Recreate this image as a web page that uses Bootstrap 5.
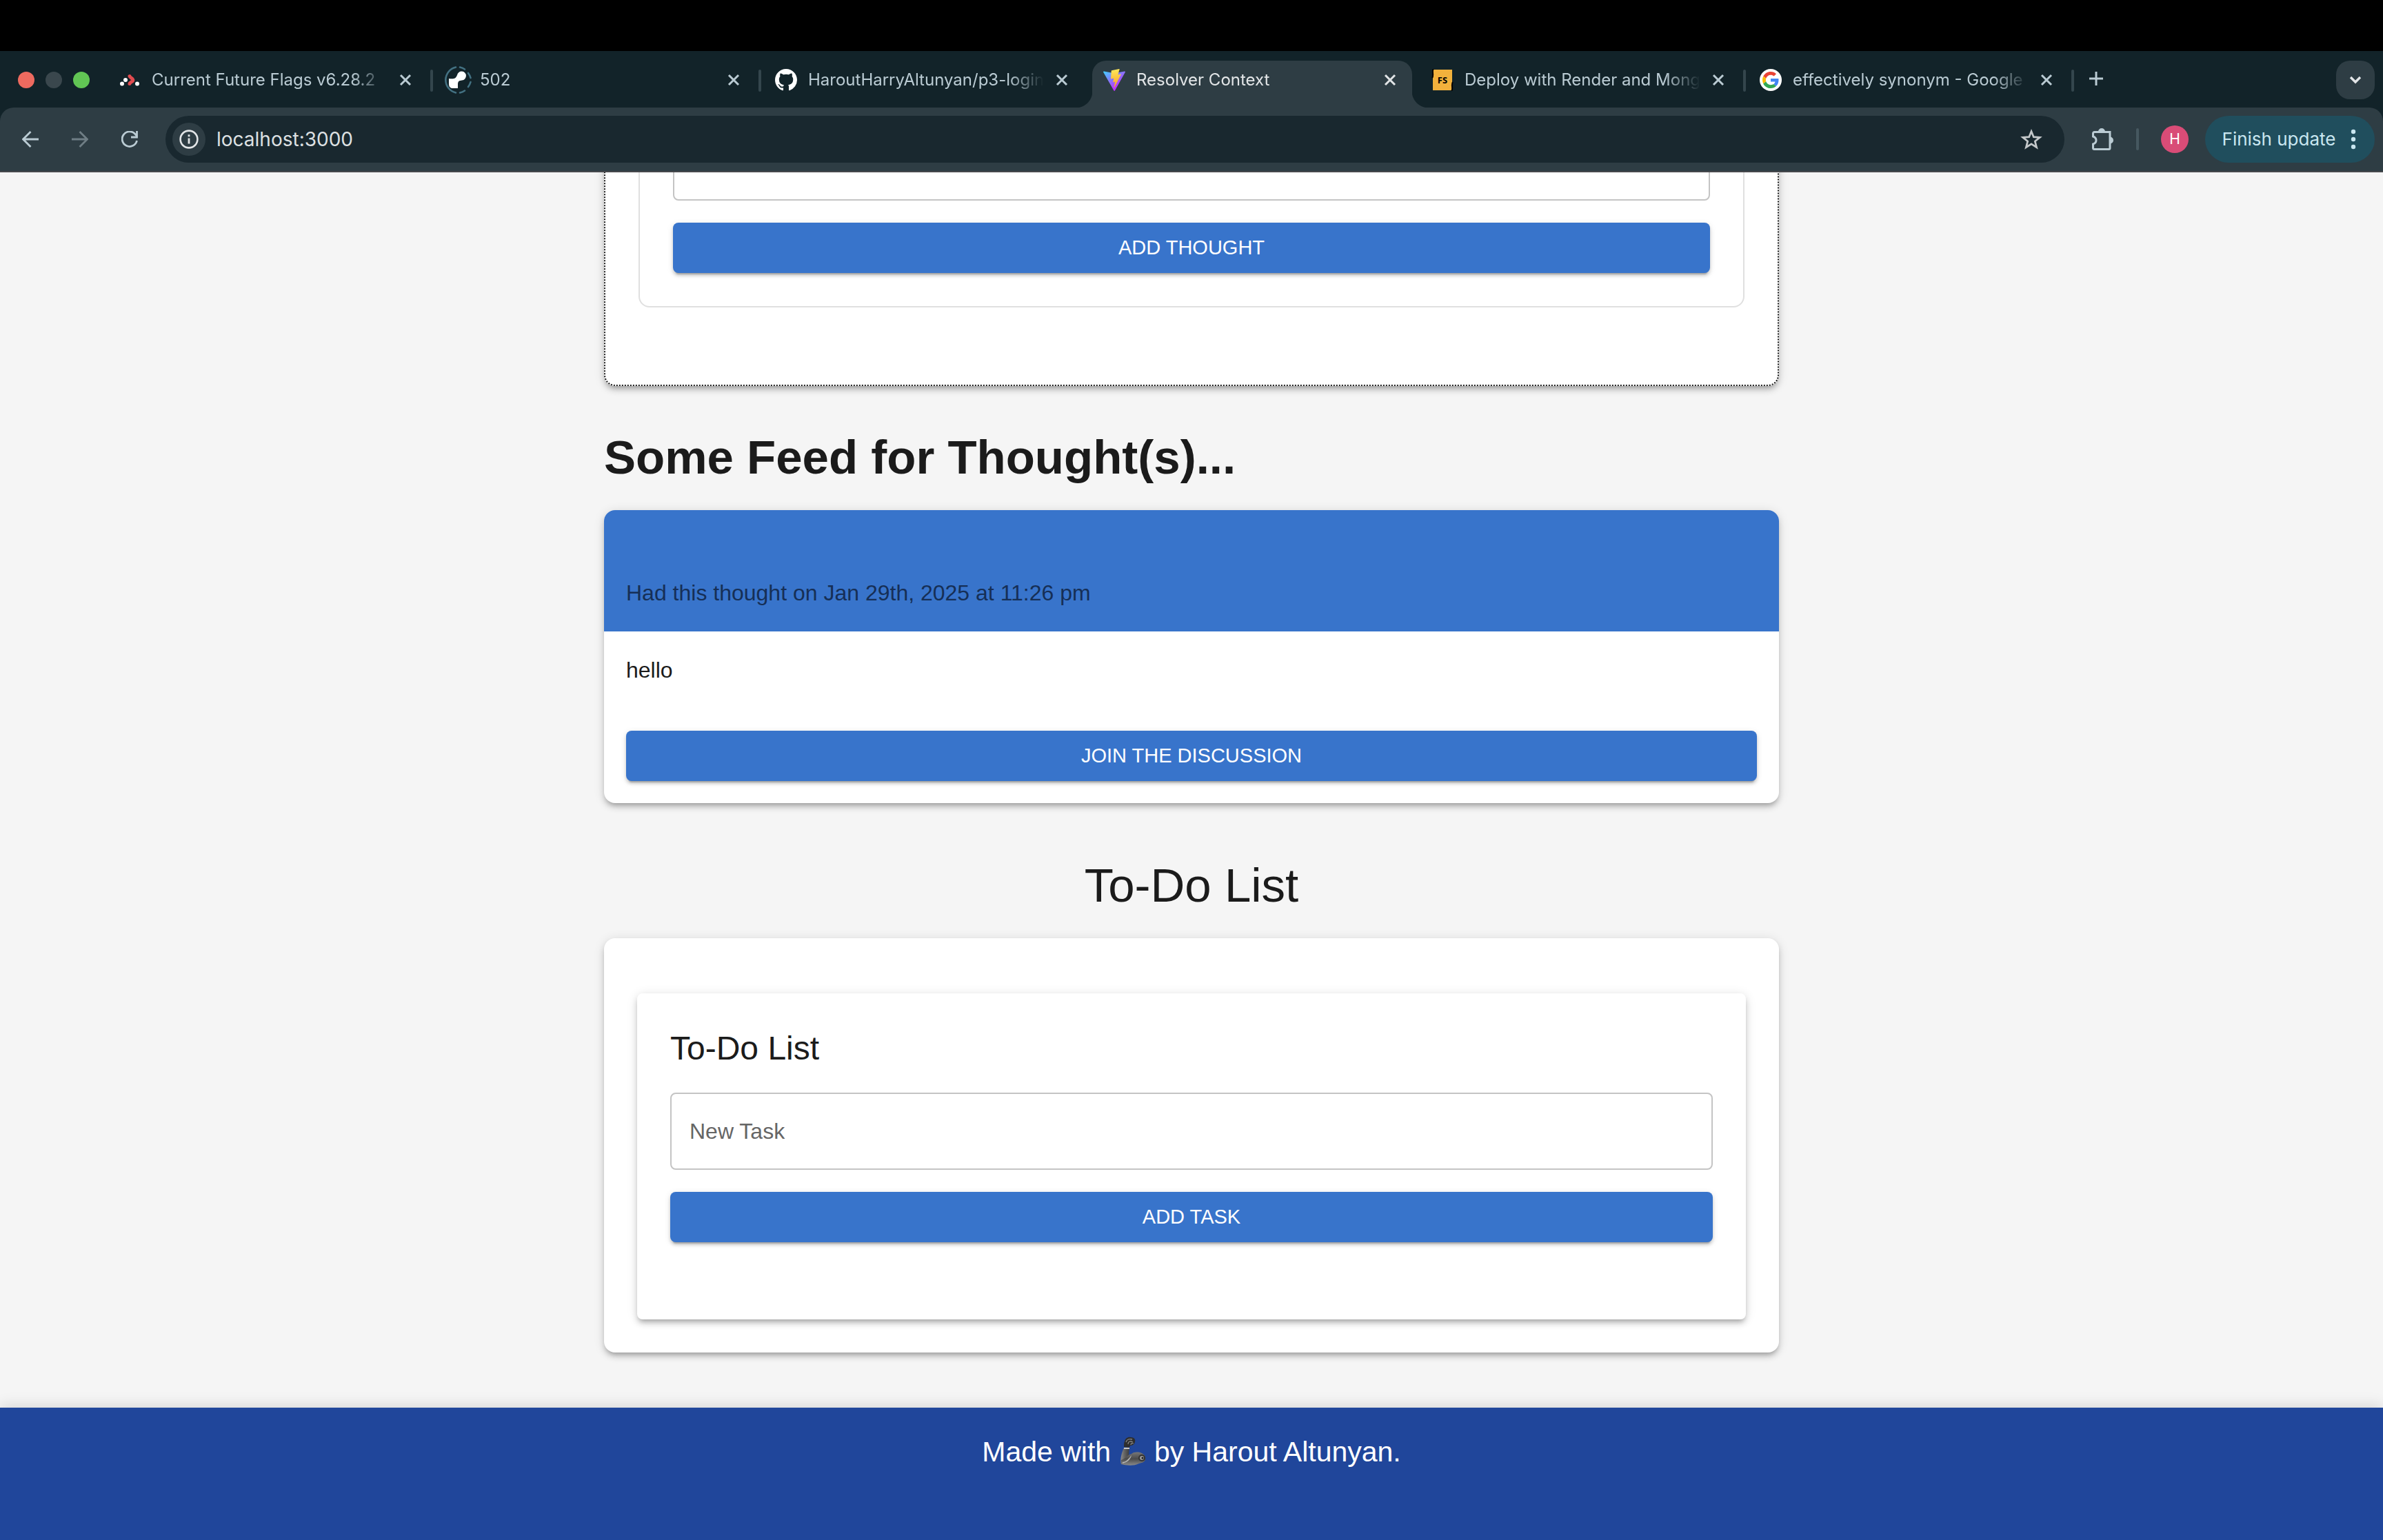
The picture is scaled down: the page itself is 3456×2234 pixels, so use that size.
<!DOCTYPE html>
<html lang="en">
<head>
<meta charset="utf-8">
<meta name="viewport" content="width=device-width, initial-scale=1">
<title>Resolver Context</title>
<link href="https://cdn.jsdelivr.net/npm/bootstrap@5.3.0/dist/css/bootstrap.min.css" rel="stylesheet">
<style>
  :root { --strip: #122329; --bar: #2e3d44; --field: #19282f; --ink: #bacbd3; --blue: #3874cb; --navy: #20469b; }
  body { background: #f5f5f5; color: #1b1b1b; font-family: "Liberation Sans", Arial, sans-serif; font-size: 32px; line-height: 48px; }
  svg { display: block; flex: none; }

  /* browser frame */
  .chrome-ui { font-family: Inter, sans-serif; color: var(--ink); background: var(--strip); line-height: 32px; }
  .chrome-ui button { border: 0; padding: 0; background: none; color: inherit; display: flex; align-items: center; justify-content: center; flex: none; }
  .menu-strip { height: 74px; background: #000; }
  .tab-strip { height: 82px; padding: 14px 12px 0 26px; }
  .lights { gap: 16px; width: 126px; height: 56px; }
  .light { width: 24px; height: 24px; border-radius: 50%; background: #3a474d; }
  .light-close { background: #ed6a5f; }
  .light-zoom { background: #61c554; }
  .tab-slot { flex: 0 1 476px; min-width: 0; padding-left: 4px; gap: 4px; }
  .tab-slot::after { content: ""; width: 4px; height: 32px; margin-top: 13px; border-radius: 2px; background: #34464d; }
  .tab-slot.plain::after { background: transparent; }
  .tab-face { position: relative; height: 68px; padding: 0 22px 12px 16px; gap: 8px; border-radius: 20px 20px 0 0; }
  .tab-face a { gap: 16px; color: inherit; font-size: 24px; }
  .tab-title { white-space: nowrap; overflow: hidden; -webkit-mask-image: linear-gradient(to left, transparent 8px, #000 60px); mask-image: linear-gradient(to left, transparent 8px, #000 60px); }
  .tab-face.current { background: var(--bar); color: #e2e5e7; }
  .tab-face.current::before, .tab-face.current::after { content: ""; position: absolute; bottom: 0; width: 24px; height: 24px; }
  .tab-face.current::before { right: 100%; background: radial-gradient(circle at 0 0, transparent 24px, var(--bar) 25px); }
  .tab-face.current::after { left: 100%; background: radial-gradient(circle at 100% 0, transparent 24px, var(--bar) 25px); }
  .new-tab { width: 64px; height: 52px; }
  .chrome-ui .tab-menu { width: 56px; height: 56px; border-radius: 20px; background: var(--bar); color: #e2e5e7; }
  .tool-bar { height: 94px; padding: 0 12px 0 20px; border-bottom: 2px solid #46484c; border-radius: 20px 20px 0 0; background: var(--bar); }
  .nav-keys { gap: 24px; width: 220px; }
  .nav-keys button { width: 48px; height: 48px; }
  .omnibox { height: 68px; padding: 0 32px 0 10px; border-radius: 34px; background: var(--field); }
  .chrome-ui .site-info { width: 48px; height: 48px; border-radius: 50%; background: var(--bar); color: #e2e5e7; }
  .omnibox input { border: 0; outline: 0; padding: 0 0 0 16px; background: none; color: #dde0e2; font-size: 28px; }
  .bar-tools { gap: 32px; padding-left: 40px; }
  .bar-rule { width: 4px; height: 32px; border-radius: 2px; background: #465860; }
  .chrome-ui .avatar { width: 40px; height: 40px; margin-right: -8px; border-radius: 50%; background: #d94c77; color: #fff; font-size: 21px; }
  .chrome-ui .update-key { width: 246px; height: 68px; gap: 22px; padding-right: 2px; border-radius: 34px; background: #204e5d; color: #c9e6f0; font-size: 26px; }

  /* page */
  .page-view { min-height: 0; }
  .page-column { width: 100%; max-width: 1704px; margin-bottom: 80px; }
  .raised { border: 0; border-radius: 16px; background: #fff; box-shadow: 0 6px 6px -4px rgba(0,0,0,.2), 0 6px 8px rgba(0,0,0,.14), 0 2px 16px rgba(0,0,0,.12); }
  .raised-inner { border-radius: 8px; padding: 48px 48px 112px; }
  .dotted-card { border: 2px dotted #1b1b1b; padding: 48px 48px 112px; margin-bottom: 64px; }
  .outline-card { border: 2px solid #e0e0e0; border-radius: 16px; padding: 48px; }
  .big-title { font-size: 69px; line-height: 80px; margin: 0 0 36px; }
  .sub-title { font-size: 48px; line-height: 64px; margin: 0 0 32px; font-weight: 400; }
  .field-box { height: 112px; padding: 0 26px; margin-bottom: 32px; border: 2px solid #c4c4c4; border-radius: 8px; font-size: 32px; }
  .field-box::placeholder { color: #666; opacity: 1; }
  .btn-wide { width: 100%; padding: 12px 32px; border: 0; border-radius: 8px; background: var(--blue); color: #fff; font-size: 29px; line-height: 49px; box-shadow: 0 6px 2px -4px rgba(0,0,0,.2), 0 4px 4px rgba(0,0,0,.14), 0 2px 10px rgba(0,0,0,.12); }
  .feed-card { margin-bottom: 80px; }
  .feed-head { padding: 96px 32px 32px; background: var(--blue); color: #162f56; border: 0; }
  .feed-head:first-child { border-radius: 16px 16px 0 0; }
  .feed-body { padding: 32px; }
  .feed-text { margin: 0 0 64px; }
  .todo-card { padding: 80px 48px 48px; }
  .site-foot { padding: 32px 32px 96px; background: var(--navy); color: #fff; font-size: 41px; line-height: 64px; box-shadow: 0 -2px 20px rgba(0,0,0,.14); }
  .site-foot svg { display: inline-block; vertical-align: -6px; }
</style>
<script src="https://cdn.jsdelivr.net/npm/bootstrap@5.3.0/dist/js/bootstrap.bundle.min.js"></script>
</head>
<body>
<svg width="0" height="0" class="position-absolute" aria-hidden="true">
  <defs>
    <symbol id="cross" viewBox="0 0 20 20"><path d="M3 3 17 17M17 3 3 17" fill="none" stroke="currentColor" stroke-width="3"/></symbol>
    <symbol id="octocat" viewBox="0 0 16 16"><path fill="#fff" d="M8 0C3.58 0 0 3.58 0 8c0 3.54 2.29 6.53 5.47 7.59.4.07.55-.17.55-.38 0-.19-.01-.82-.01-1.49-2.01.37-2.53-.49-2.69-.94-.09-.23-.48-.94-.82-1.13-.28-.15-.68-.52-.01-.53.63-.01 1.08.58 1.23.82.72 1.21 1.87.87 2.33.66.07-.52.28-.87.51-1.07-1.78-.2-3.64-.89-3.64-3.95 0-.87.31-1.59.82-2.15-.08-.2-.36-1.02.08-2.12 0 0 .67-.21 2.2.82.64-.18 1.32-.27 2-.27s1.36.09 2 .27c1.53-1.04 2.2-.82 2.2-.82.44 1.1.16 1.92.08 2.12.51.56.82 1.27.82 2.15 0 3.07-1.87 3.75-3.65 3.95.29.25.54.73.54 1.48 0 1.07-.01 1.93-.01 2.2 0 .21.15.46.55.38A8.01 8.01 0 0 0 16 8c0-4.42-3.58-8-8-8z"/></symbol>
    <linearGradient id="vg1" x1="0" x2=".6" y1="0" y2=".8"><stop offset="0" stop-color="#41d1ff"/><stop offset="1" stop-color="#bd34fe"/></linearGradient>
    <linearGradient id="vg2" x1=".43" x2=".5" y1="0" y2=".9"><stop offset="0" stop-color="#ffea5a"/><stop offset="1" stop-color="#f9a62b"/></linearGradient>
    <linearGradient id="steel" x1="0" x2="1" y1="0" y2="0"><stop offset="0" stop-color="#8c8c8c"/><stop offset=".4" stop-color="#666"/><stop offset="1" stop-color="#3c3c3c"/></linearGradient>
    <linearGradient id="bicep" x1="0" x2="0" y1="0" y2="1"><stop offset="0" stop-color="#777"/><stop offset=".5" stop-color="#4a4a4a"/><stop offset="1" stop-color="#8a8a8a"/></linearGradient>
  </defs>
</svg>

<div class="vh-100 d-flex flex-column overflow-hidden">
  <header class="chrome-ui flex-shrink-0">
    <div class="menu-strip"></div>

    <div class="tab-strip d-flex">
      <div class="lights d-flex align-items-center flex-shrink-0">
        <span class="light light-close"></span><span class="light"></span><span class="light light-zoom"></span>
      </div>

      <div class="tab-slot d-flex">
        <div class="tab-face d-flex align-items-center flex-fill overflow-hidden">
          <a href="#" class="d-flex align-items-center flex-fill overflow-hidden text-decoration-none">
            <svg width="32" height="32" viewBox="0 0 32 32"><g fill="#fff"><circle cx="5" cy="21.500" r="3"/><circle cx="10" cy="16" r="3"/><circle cx="27" cy="21.500" r="3"/></g><path d="M16 10.500c1 3 5 3 5 5.500s-4 2.500-5 5.500" fill="none" stroke="#e14b4f" stroke-width="5" stroke-linecap="round" stroke-linejoin="round"/></svg>
            <span class="tab-title flex-fill">Current Future Flags v6.28.2</span>
          </a>
          <button type="button" aria-label="Close tab"><svg width="20" height="20"><use href="#cross"/></svg></button>
        </div>
      </div>

      <div class="tab-slot d-flex">
        <div class="tab-face d-flex align-items-center flex-fill">
          <a href="#" class="d-flex align-items-center flex-fill text-decoration-none">
            <svg width="32" height="32" viewBox="0 0 32 32" overflow="visible"><g fill="none" stroke="#437182" stroke-width="2.600" stroke-linecap="round"><path d="M13-2.500A19 19 0 0 0 13 34.500"/><path d="M19-2.500a19 19 0 0 1 7 3M31 6a19 19 0 0 1 3.500 7M34.500 19a19 19 0 0 1-3.500 7M26 31.500a19 19 0 0 1-7 3"/></g><path fill="#fff" d="M3 14c7 1 10 0 12-5a6.500 6.500 0 1 1 7 7.500c-4 .3-6 1.500-6 5.500v6H7c-3-1-4-3-4-6z"/></svg>
            <span class="tab-title flex-fill">502</span>
          </a>
          <button type="button" aria-label="Close tab"><svg width="20" height="20"><use href="#cross"/></svg></button>
        </div>
      </div>

      <div class="tab-slot plain d-flex">
        <div class="tab-face d-flex align-items-center flex-fill overflow-hidden">
          <a href="#" class="d-flex align-items-center flex-fill overflow-hidden text-decoration-none">
            <svg width="32" height="32"><use href="#octocat"/></svg>
            <span class="tab-title flex-fill">HaroutHarryAltunyan/p3-login</span>
          </a>
          <button type="button" aria-label="Close tab"><svg width="20" height="20"><use href="#cross"/></svg></button>
        </div>
      </div>

      <div class="tab-slot plain d-flex">
        <div class="tab-face current d-flex align-items-center flex-fill">
          <a href="#" class="d-flex align-items-center flex-fill text-decoration-none" aria-current="page">
            <svg width="32" height="32" viewBox="0 0 256 257"><path fill="url(#vg1)" d="M255.153 37.938 134.897 252.976c-2.483 4.44-8.862 4.466-11.382.048L.875 37.958c-2.746-4.814 1.371-10.646 6.827-9.67l120.385 21.517a6.537 6.537 0 0 0 2.322-.004l117.867-21.483c5.438-.991 9.574 4.796 6.877 9.62Z"/><path fill="url(#vg2)" d="M185.432.063 96.44 17.501a3.268 3.268 0 0 0-2.634 3.014l-5.474 92.456a3.268 3.268 0 0 0 3.997 3.378l24.777-5.718c2.318-.535 4.413 1.507 3.936 3.838l-7.361 36.047c-.495 2.426 1.782 4.5 4.151 3.78l15.304-4.649c2.372-.72 4.652 1.36 4.15 3.788l-11.698 56.621c-.732 3.542 3.979 5.473 5.943 2.437l1.313-2.028 72.516-144.72c1.215-2.423-.88-5.186-3.54-4.672l-25.505 4.922c-2.396.462-4.435-1.77-3.759-4.114l16.646-57.705c.677-2.35-1.37-4.583-3.769-4.113Z"/></svg>
            <span class="tab-title flex-fill">Resolver Context</span>
          </a>
          <button type="button" aria-label="Close tab"><svg width="20" height="20"><use href="#cross"/></svg></button>
        </div>
      </div>

      <div class="tab-slot d-flex">
        <div class="tab-face d-flex align-items-center flex-fill overflow-hidden">
          <a href="#" class="d-flex align-items-center flex-fill overflow-hidden text-decoration-none">
            <svg width="32" height="32" viewBox="0 0 32 32"><path fill="#f2b13c" d="M2 1h28v30H2z"/><path fill="none" stroke="#000" stroke-width="2" d="M3 0C0 2 4 10 1 13M29 32c3-2-1-10 2-13"/><text x="16" y="21" text-anchor="middle" font-family="Noto Sans, sans-serif" font-weight="700" font-size="13" fill="#000">FS</text></svg>
            <span class="tab-title flex-fill">Deploy with Render and Mong</span>
          </a>
          <button type="button" aria-label="Close tab"><svg width="20" height="20"><use href="#cross"/></svg></button>
        </div>
      </div>

      <div class="tab-slot d-flex">
        <div class="tab-face d-flex align-items-center flex-fill overflow-hidden">
          <a href="#" class="d-flex align-items-center flex-fill overflow-hidden text-decoration-none">
            <svg width="32" height="32" viewBox="-8 -8 64 64"><circle cx="24" cy="24" r="32" fill="#fff"/><path fill="#EA4335" d="M24 9.5c3.54 0 6.71 1.22 9.21 3.6l6.85-6.85C35.9 2.38 30.47 0 24 0 14.62 0 6.51 5.38 2.56 13.22l7.98 6.19C12.43 13.72 17.74 9.5 24 9.5z"/><path fill="#4285F4" d="M46.98 24.55c0-1.57-.15-3.09-.38-4.55H24v9.02h12.94c-.58 2.96-2.26 5.48-4.78 7.18l7.73 6c4.51-4.18 7.09-10.36 7.09-17.65z"/><path fill="#FBBC05" d="M10.53 28.59c-.48-1.45-.76-2.99-.76-4.59s.27-3.14.76-4.59l-7.98-6.19C.92 16.46 0 20.12 0 24c0 3.88.92 7.54 2.56 10.78l7.97-6.19z"/><path fill="#34A853" d="M24 48c6.48 0 11.93-2.13 15.89-5.81l-7.73-6c-2.15 1.45-4.92 2.3-8.16 2.3-6.26 0-11.57-4.22-13.47-9.91l-7.98 6.19C6.51 42.62 14.62 48 24 48z"/></svg>
            <span class="tab-title flex-fill">effectively synonym - Google</span>
          </a>
          <button type="button" aria-label="Close tab"><svg width="20" height="20"><use href="#cross"/></svg></button>
        </div>
      </div>

      <button type="button" class="new-tab" aria-label="New tab"><svg width="20" height="20" viewBox="0 0 20 20"><path d="M10 0v20M0 10h20" stroke="currentColor" stroke-width="3"/></svg></button>
      <button type="button" class="tab-menu ms-auto" aria-label="Search tabs"><svg width="20" height="20" viewBox="0 0 20 20"><path d="m3 6 7 7 7-7" fill="none" stroke="currentColor" stroke-width="3.400"/></svg></button>
    </div>

    <div class="tool-bar d-flex align-items-center">
      <div class="nav-keys d-flex flex-shrink-0">
        <button type="button" aria-label="Back"><svg width="24" height="24" viewBox="0 0 24 24"><path d="M24 12H2M12.500 1 1.500 12l11 11" fill="none" stroke="currentColor" stroke-width="2.800"/></svg></button>
        <button type="button" aria-label="Forward" disabled><svg width="24" height="24" viewBox="0 0 24 24"><path d="M0 12h22M11.500 1l11 11-11 11" fill="none" stroke="#6f7e85" stroke-width="2.800"/></svg></button>
        <button type="button" aria-label="Reload"><svg width="24" height="24" viewBox="0 0 24 24"><path d="M22.500 14A10.800 10.800 0 1 1 20 4.500l3 4" fill="none" stroke="currentColor" stroke-width="2.800"/><path d="M22.500 0v9H14" fill="none" stroke="currentColor" stroke-width="2.800"/></svg></button>
      </div>
      <div class="omnibox d-flex align-items-center flex-fill">
        <button type="button" class="site-info" aria-label="Site information"><svg width="28" height="28" viewBox="0 0 28 28"><circle cx="14" cy="14" r="12.400" fill="none" stroke="currentColor" stroke-width="2.600"/><path d="M14 12.500v8M14 7.300v2.900" stroke="currentColor" stroke-width="2.800"/></svg></button>
        <input type="text" class="flex-fill" value="localhost:3000" aria-label="Address">
        <button type="button" aria-label="Bookmark"><svg width="32" height="32" viewBox="0 0 32 32"><path d="m16 4.500 3.300 8.200 9 .6-7 5.600 2.300 8.800L16 22.900l-7.600 4.800 2.300-8.800-7-5.600 9-.6z" fill="none" stroke="#c4c8ca" stroke-width="2.700"/></svg></button>
      </div>
      <div class="bar-tools d-flex align-items-center flex-shrink-0">
        <button type="button" aria-label="Extensions"><svg width="32" height="34" viewBox="0 0 32 34"><path d="M3.500 6.500h22.500v23.500a1.500 1.500 0 0 1-1.500 1.500H3.500a2 2 0 0 1-2-2V24c6-2 6-9 0-11V8.500a2 2 0 0 1 2-2z" fill="none" stroke="currentColor" stroke-width="3"/><path fill="currentColor" d="M9 6a5 5 0 0 1 10 0zM26 13.500a5 5 0 0 1 0 10z"/></svg></button>
        <span class="bar-rule"></span>
        <button type="button" class="avatar" aria-label="Profile">H</button>
        <button type="button" class="update-key">Finish update <svg width="8" height="32" viewBox="0 0 8 32" fill="currentColor"><circle cx="4" cy="5" r="3.200"/><circle cx="4" cy="16" r="3.200"/><circle cx="4" cy="27" r="3.200"/></svg></button>
      </div>
    </div>
  </header>

  <div class="page-view d-flex flex-column justify-content-end flex-fill overflow-hidden">
    <main class="page-column mx-auto flex-shrink-0">
      <section class="raised dotted-card">
        <form class="outline-card">
          <input type="text" class="field-box form-control" aria-label="Thought">
          <button type="button" class="btn btn-wide">ADD THOUGHT</button>
        </form>
      </section>

      <h1 class="big-title fw-bold">Some Feed for Thought(s)...</h1>
      <article class="card raised feed-card">
        <div class="card-header feed-head">Had this thought on Jan 29th, 2025 at 11:26 pm</div>
        <div class="card-body feed-body">
          <p class="feed-text">hello</p>
          <button type="button" class="btn btn-wide">JOIN THE DISCUSSION</button>
        </div>
      </article>

      <h2 class="big-title fw-normal text-center">To-Do List</h2>
      <section class="raised todo-card">
        <form class="raised raised-inner">
          <h3 class="sub-title">To-Do List</h3>
          <input type="text" class="field-box form-control" placeholder="New Task" aria-label="New Task">
          <button type="button" class="btn btn-wide">ADD TASK</button>
        </form>
      </section>
    </main>

    <footer class="site-foot text-center flex-shrink-0">Made with
      <svg width="40" height="42" viewBox="0 0 40 42" role="img" aria-label="mechanical arm"><path fill="url(#steel)" d="M7 16h8c-1 7-1 13-1 18L3 40c-2-8 1-17 4-24z"/><path fill="url(#bicep)" d="M3 34c6-1 9-8 15-9 4-3 10-3 15-1 4 2 6 6 5 10-2 4-6 4-9 5-8 4-18 3-26 1z"/><path fill="#b5b5b5" d="M5 37c5 0 9-5 13-10-1 5-5 10-13 12z"/><path fill="#c9c9c9" d="M7 16h8v2H7z"/><path fill="#2e2e2e" d="M7 15c0-4 0-6 1-8 1-5 5-7 9-6 5 0 7 3 6 7-1 4-4 5-7 5l-1 3z"/><path fill="none" stroke="#888" stroke-width="1.300" d="M10 8c1-4 5-5 9-4M13 11c0-4 3-5 7-3M17 12c0-2 2-3 4-2"/><circle cx="33" cy="31" r="5" fill="#333"/><circle cx="33" cy="31" r="3" fill="#999"/><circle cx="34" cy="31" r="1.500" fill="#222"/></svg>
      by Harout Altunyan.</footer>
  </div>
</div>
</body>
</html>
